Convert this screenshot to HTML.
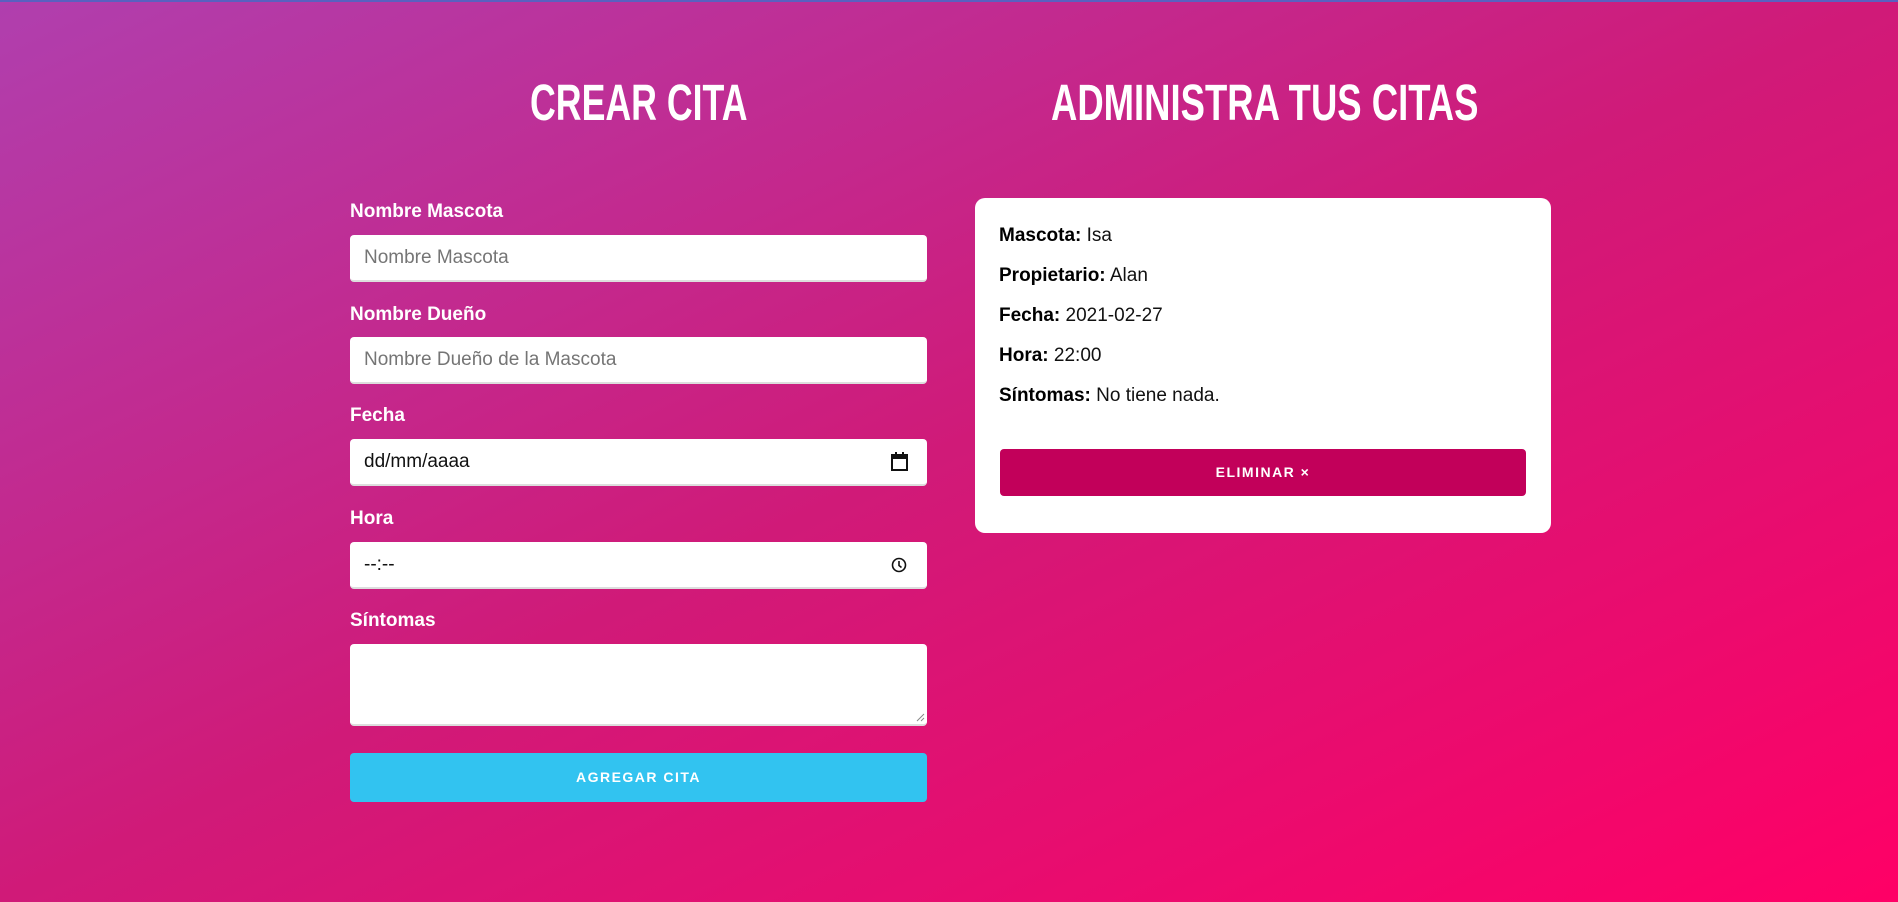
<!DOCTYPE html>
<html><head><meta charset="utf-8"><style>
*{box-sizing:border-box;margin:0;padding:0}
html,body{width:1898px;height:902px;overflow:hidden}
body{background:linear-gradient(to bottom right,#b03fae 0%,#d01a78 50%,#ff0066 100%);font-family:"Liberation Sans",Arial,sans-serif;position:relative;border-top:2px solid #5a60c0}
.h{position:absolute;top:76px;color:#fff;font-family:"Liberation Sans Narrow","Liberation Sans",sans-serif;font-weight:bold;font-size:51px;line-height:50px;white-space:nowrap;transform-origin:left center}
.lab{position:absolute;left:350px;color:#fff;font-weight:bold;font-size:19px}
.inp{position:absolute;left:350px;width:577px;height:47px;background:#fff;border-radius:4px;border-bottom:2px solid #ddd;font-size:19px;color:#757575;padding:12px 14px;line-height:22px}
.card{position:absolute;left:975px;top:196px;width:576px;height:335px;background:#fff;border-radius:10px}
.card p{position:absolute;left:24px;font-size:19px;color:#111}
.card b{color:#000}
.btn{position:absolute;color:#fff;font-weight:bold;font-size:14px;letter-spacing:1.5px;text-align:center;border-radius:4px}
</style></head><body>
<div class="h" style="left:530px;transform:scaleX(0.70)">CREAR CITA</div>
<div class="h" style="left:1051px;transform:scaleX(0.715)">ADMINISTRA TUS CITAS</div>

<div class="lab" style="top:199px">Nombre Mascota</div>
<div class="inp" style="top:233px">Nombre Mascota</div>
<div class="lab" style="top:302px">Nombre Dueño</div>
<div class="inp" style="top:335px">Nombre Dueño de la Mascota</div>
<div class="lab" style="top:403px">Fecha</div>
<div class="inp" style="top:437px;color:#111">dd/mm/aaaa
<svg style="position:absolute;right:18px;top:13px" width="19" height="20" viewBox="0 0 19 20"><rect x="2" y="3" width="15" height="15" fill="none" stroke="#111" stroke-width="2"/><rect x="2" y="3" width="15" height="4" fill="#111"/><rect x="5" y="0" width="2" height="4" fill="#111"/><rect x="12" y="0" width="2" height="4" fill="#111"/></svg></div>
<div class="lab" style="top:506px">Hora</div>
<div class="inp" style="top:540px;color:#111">--:--
<svg style="position:absolute;right:20px;top:15px" width="16" height="16" viewBox="0 0 16 16"><circle cx="8" cy="8" r="6.5" fill="none" stroke="#111" stroke-width="1.6"/><path d="M8 4v4.5l2.5 2" fill="none" stroke="#111" stroke-width="1.6"/></svg></div>
<div class="lab" style="top:608px">Síntomas</div>
<div class="inp" style="top:642px;height:82px">
<svg style="position:absolute;right:2px;bottom:2px" width="10" height="10" viewBox="0 0 10 10"><path d="M9 2L2 9M9 6L6 9" stroke="#888" stroke-width="1"/></svg></div>
<div class="btn" style="left:350px;top:751px;width:577px;height:49px;line-height:49px;background:#32c3f0">AGREGAR CITA</div>

<div class="card">
<p style="top:27px"><b>Mascota:</b> Isa</p>
<p style="top:67px"><b>Propietario:</b> Alan</p>
<p style="top:107px"><b>Fecha:</b> 2021-02-27</p>
<p style="top:147px"><b>Hora:</b> 22:00</p>
<p style="top:187px"><b>Síntomas:</b> No tiene nada.</p>
<div class="btn" style="left:25px;top:251px;width:526px;height:47px;line-height:47px;background:#c2005a">ELIMINAR ×</div>
</div>
</body></html>
